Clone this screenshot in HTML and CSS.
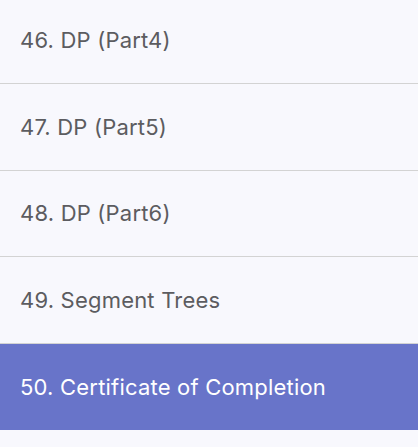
FILE: index.html
```html
<!DOCTYPE html>
<html>
<head>
<meta charset="utf-8">
<link rel="stylesheet" href="styles.css">
</head>
<body>
<ul class="list">
  <li class="item">46. DP (Part4)</li>
  <li class="item">47. DP (Part5)</li>
  <li class="item">48. DP (Part6)</li>
  <li class="item">49. Segment Trees</li>
  <li class="item active">50. Certificate of Completion</li>
</ul>
</body>
</html>
```

FILE: styles.css
```css
html, body {
  margin: 0;
  padding: 0;
  background: #f8f8fd;
}
body {
  overflow: hidden;
  height: 447px;
}
.list {
  list-style: none;
  margin: -2.6px 0 0 0;
  padding: 0;
}
.item {
  box-sizing: border-box;
  height: 86.6px;
  display: flex;
  align-items: center;
  padding: 0 20px;
  border-bottom: 1px solid #d3d3d3;
  font-family: Inter, "Noto Sans", sans-serif;
  font-size: 22px;
  letter-spacing: 0.2px;
  color: #5c5c60;
}
.item.active {
  background: #6874c9;
  color: #ffffff;
  border-bottom: none;
  height: 86px;
}
```
